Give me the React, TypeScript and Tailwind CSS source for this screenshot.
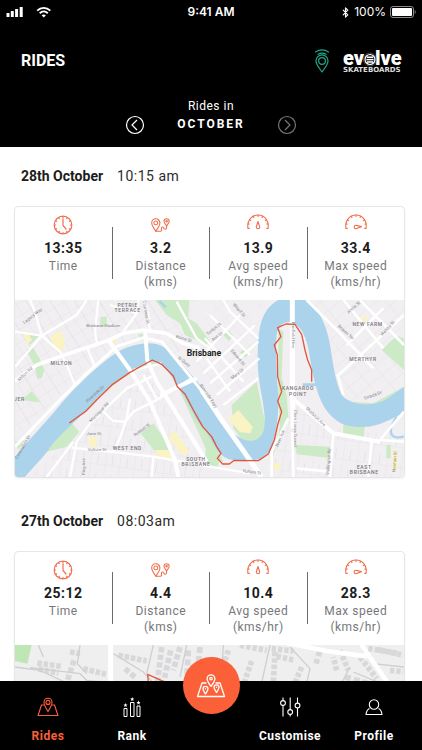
import React from "react";
import { Bluetooth } from "lucide-react";

type IconProps = { className?: string };

const rides = [
  { date: "28th October", time: "10:15 am", duration: "13:35", distance: "3.2", avg: "13.9", max: "33.4", map: <CityMap /> },
  { date: "27th October", time: "08:03am", duration: "25:12", distance: "4.4", avg: "10.4", max: "28.3", map: <SuburbMap /> },
];

/* Icons */
function ClockIcon() {
  return (
    <svg viewBox="0 0 24 22" className="h-[22px] w-6" fill="none" stroke="#f0704f" strokeWidth="1.2" strokeLinecap="round">
      <circle cx="12" cy="11" r="8.8" />
      <path d="M12 4.5V11.5L15 15" />
      <path d="M12 2.5v1M12 18.5v1M3.5 11h1M19.5 11h1M7.8 3.7l.5.9M15.7 17.4l.5.9M4.7 6.8l.9.5M18.4 14.7l.9.5M16.2 3.7l-.5.9M8.3 17.4l-.5.9M19.3 6.8l-.9.5M5.6 14.7l-.9.5" />
    </svg>
  );
}

function DistanceIcon() {
  return (
    <svg viewBox="0 0 24 22" className="h-[22px] w-6" fill="none" stroke="#f0704f" strokeWidth="1.1" strokeLinecap="round" strokeLinejoin="round">
      <path d="M6.8 17.2C5 14.4 2.7 11.4 2.7 8.900a4 4 0 0 1 8.200 0c0 2.500-2.300 5.500-4.100 8.300z" />
      <circle cx="6.800" cy="8.900" r="1.900" />
      <path d="M17.600 11.800c-1.200-1.500-2.600-2.900-2.600-4.500a2.600 2.600 0 0 1 5.200 0c0 1.600-1.400 3-2.600 4.500z" />
      <circle cx="17.600" cy="7.300" r=".7" />
      <path d="M6.800 17.200h4.600c2.600 0-.3-4.200 2.100-4.200 1.900 0 .7 2.300 2.600 2.300 1.700 0 1.500-1.900 1.500-3.500" />
    </svg>
  );
}

function GaugeIcon({ fast }: { fast?: boolean }) {
  return (
    <svg viewBox="0 0 24 22" className="h-[22px] w-6" fill="none" stroke="#f0704f" strokeWidth="1.1" strokeLinecap="round" strokeLinejoin="round">
      <path d="M2 14.500C.6 7 5.500 1 12 1s11.400 6 10 13.500" />
      <path d="M2 14.500l1.500-.3M22 14.500l-1.500-.3M1.700 10h1.500M22.300 10h-1.500M3.500 5.800l1.200.8M20.500 5.800l-1.200.8M7.200 2.300l.7 1.300M16.800 2.300l-.7 1.300M12 1v1.500" />
      <path
        transform={fast ? "rotate(86 12 13)" : undefined}
        d="M12 7.500l1.600 5c.5 1.500-.6 2.300-1.600 2.300s-2.100-.8-1.600-2.300z"
      />
    </svg>
  );
}

function RidesIcon({ className }: IconProps) {
  return (
    <svg viewBox="0 0 22 20" className={className} fill="none" stroke="currentColor" strokeWidth="1.1" strokeLinejoin="round" strokeLinecap="round">
      <path d="M6.500 8H4.500L1 18.500h20L17.500 8h-2" />
      <path d="M11 14.500C9 11.500 7 8.200 7 5.300a4 4 0 0 1 8 0C15 8.200 13 11.500 11 14.500z" />
      <circle cx="11" cy="5.400" r="2" />
    </svg>
  );
}

function RankIcon({ className }: IconProps) {
  return (
    <svg viewBox="0 0 20 20" className={className} fill="none" stroke="currentColor" strokeWidth="1">
      <path d="M2 11.500h3v8H2zM8.500 5.500h3.500v14H8.500zM15 9h3v10.500h-3z" />
      <path
        fill="currentColor"
        stroke="none"
        d="M10.200 0l.6 1.400 1.500.1-1.200 1 .4 1.500-1.300-.8-1.300.8.4-1.500-1.200-1 1.500-.1zM3.500 6l.6 1.400 1.500.1-1.200 1 .4 1.500-1.300-.8-1.300.8.4-1.500-1.200-1 1.500-.1zM16.500 3.500l.6 1.400 1.500.1-1.200 1 .4 1.500-1.300-.8-1.300.8.4-1.500-1.200-1 1.500-.1z"
      />
    </svg>
  );
}

function CustomiseIcon({ className }: IconProps) {
  return (
    <svg viewBox="0 0 22 20" className={className} fill="none" stroke="currentColor" strokeWidth="1.100">
      <path d="M4 .5v3M4 8.500v11M11.200.5v12M11.200 17.500v2M18.500.5v5.500M18.500 11v8.500" />
      <circle cx="4" cy="6" r="2.400" />
      <circle cx="11.200" cy="15" r="2.400" />
      <circle cx="18.500" cy="8.500" r="2.400" />
    </svg>
  );
}

function ProfileIcon({ className }: IconProps) {
  return (
    <svg viewBox="0 0 20 20" className={className} fill="none" stroke="currentColor" strokeWidth="1.100" strokeLinejoin="round">
      <circle cx="10" cy="7.500" r="4.700" />
      <path d="M5.500 11.500C3.500 12.500 2.300 14.500 2 17.500h16c-.3-3-1.500-5-3.500-6" />
    </svg>
  );
}

function TrackIcon() {
  return (
    <svg viewBox="0 0 30 24" className="h-6 w-[30px]" fill="none" stroke="white" strokeWidth="1.300" strokeLinejoin="round" strokeLinecap="round">
      <path d="M10 9H6L1.500 22.500h27L24 9h-4" />
      <path d="M15 12.500c-2-3-3.900-5.300-3.900-7.800a3.900 3.900 0 0 1 7.800 0c0 2.500-1.900 4.800-3.900 7.800z" />
      <circle cx="15" cy="4.600" r="1.300" />
      <path d="M9.500 20c-1.300-2-2.500-3.500-2.500-5.200a2.500 2.500 0 0 1 5 0c0 1.700-1.200 3.200-2.500 5.200zM20.500 18.500c-1.300-2-2.500-3.500-2.500-5.200a2.500 2.500 0 0 1 5 0c0 1.700-1.200 3.200-2.500 5.200z" />
      <path d="M9.500 14.600v.3M20.500 13.100v.3" />
    </svg>
  );
}

function BoardPin() {
  return (
    <svg viewBox="0 0 16 24" className="h-6 w-4" fill="none" stroke="#1fa88c" strokeWidth="1.200" strokeLinecap="round" strokeLinejoin="round">
      <path d="M1.500 3C5.500.4 10.500.4 14.500 3M4 5.300c2.600-1.400 5.400-1.400 8 0" />
      <path d="M8 23C5 18.500 2 15.500 2 11.900a6 6 0 0 1 12 0C14 15.500 11 18.500 8 23z" />
      <circle cx="8" cy="12" r="3.400" />
    </svg>
  );
}

function Logo() {
  return (
    <svg viewBox="0 0 60 32" className="h-8 w-[60px]" role="img" aria-label="evolve skateboards" fill="white">
      <g fontFamily="Roboto, sans-serif" fontWeight="900" fontSize="20">
        <text x="0" y="20">ev</text>
        <text x="32" y="20">lve</text>
      </g>
      <circle cx="27" cy="14.500" r="5" fill="#222" stroke="white" strokeWidth="1.200" />
      <circle cx="27" cy="14.500" r="6.500" fill="none" stroke="#777" strokeWidth=".6" />
      <path d="M24 12.200h6M23.500 14.600h7M24 17h6" stroke="white" strokeWidth="1.400" />
      <text x="0" y="27" fontFamily="'DejaVu Sans', sans-serif" fontWeight="700" fontSize="7" fill="#ddd">
        SKATEBOARDS
      </text>
    </svg>
  );
}

/* Maps */
function CityMap() {
  return (
    <svg viewBox="15 15 1167 531" className="block w-full bg-[#f1eff1]" fill="none" fontFamily="Roboto, sans-serif">
      <defs>
        <pattern id="blocksWest" width="62" height="34" patternUnits="userSpaceOnUse" patternTransform="rotate(-32)">
          <path d="M0 0H62M0 0V34M31 0V34" stroke="#e1dfe2" strokeWidth="2" />
        </pattern>
        <pattern id="blocksSouth" width="44" height="58" patternUnits="userSpaceOnUse" patternTransform="rotate(8)">
          <path d="M0 0H44M0 0V58M22 28V58" stroke="#e1dfe2" strokeWidth="2" />
        </pattern>
        <pattern id="blocksEast" width="50" height="36" patternUnits="userSpaceOnUse" patternTransform="rotate(-40)">
          <path d="M0 0H50M0 0V36" stroke="#e1dfe2" strokeWidth="2" />
        </pattern>
      </defs>
      <path d="M15 15H560L500 190 400 130 230 215 15 440z" fill="url(#blocksWest)" />
      <path d="M60 546L220 400 420 200 500 330 590 546z" fill="url(#blocksSouth)" />
      <path d="M790 546V400L850 310 980 400 1182 420V546z" fill="url(#blocksSouth)" />
      <path d="M900 15H1182V290L1020 320z" fill="url(#blocksEast)" />
      <path d="M590 15H760L750 290 640 360 560 220z" fill="url(#blocksEast)" opacity=".6" />

      {/* parks */}
      <g fill="#cdeac6">
        <path d="M435 15L470 60 510 85 525 120 590 150 600 138 560 85 535 70 538 15z" />
        <path d="M48 165L70 158 88 190 103 225 95 250 82 252 75 215z" />
        <path d="M35 110L90 118 60 150z" />
        <path d="M35 315L65 288 90 322z" />
        <path d="M272 65h18v30h-20z" />
        <path d="M130 420L185 383 208 410 170 455 110 470 50 535 40 543z" />
        <path d="M392 415L430 385 490 470 450 490z" />
        <path d="M510 290L530 300 560 350 610 440 640 500 600 490 560 400z" />
        <path d="M200 345L270 285 340 235 400 200 440 190 445 210 400 212 330 255 270 305 220 360z" />
        <path d="M385 118h26l-8 18h-12z" />
        <path d="M740 260L765 380 762 415 740 440 700 440 670 400 665 330z" />
        <path d="M640 120l16-14 14 16-14 16zM690 172l14-14 14 16-12 14z" />
        <path d="M805 100L820 110 815 250 830 300 835 370 800 450 790 480 780 490 810 400 805 300z" />
        <path d="M1115 165L1160 122 1182 130V225z" />
        <path d="M1000 380h65l-4 55-62-12z" />
        <path d="M855 450L960 455 955 488 860 478z" />
        <path d="M975 290L1020 340 1090 340 1182 290V275L1090 325 1020 320z" />
        <path d="M1130 450h12v40h-14z" />
        <path d="M15 440l30-5-20 30zM590 450l40 40-8 30-40-20z" />
      </g>
      <g fill="#faf3c3">
        <path d="M120 125L150 107 165 135 160 165 140 170z" />
        <path d="M36 112l16-2 14 26-14 12z" />
        <path d="M475 425L495 408 540 470 515 480z" />
        <path d="M435 465h40l15 30-50-8z" />
        <path d="M238 425h22v30h-22z" />
        <path d="M655 372L685 345 728 395 722 415 690 412z" />
        <path d="M1050 70l16-8 8 14-16 8zM1148 465h14v60h-16zM790 505h20v20h-20zM300 130h18v14h-18z" />
      </g>

      {/* river */}
      <path
        d="M15 485C60 430 110 380 150 330C210 260 300 178 345 160C380 146 430 135 465 158C500 185 540 235 575 275C610 320 625 375 655 400C690 440 740 455 760 410C775 350 745 290 743 200C745 110 745 50 805 15H885C925 35 950 90 960 150C970 210 980 290 1005 310C1040 335 1100 335 1140 305L1182 275V355C1140 370 1115 395 1060 396C1010 398 975 385 945 340C915 290 905 220 895 160C885 115 870 95 850 85C830 72 803 90 800 120C795 170 800 240 805 300C808 350 800 420 780 465C760 500 705 506 655 492C620 480 610 440 585 405C560 385 545 340 520 300C495 270 485 235 460 212C435 192 410 198 370 225C320 252 270 295 230 345C190 385 150 420 125 450C100 490 70 515 45 546H15z"
        fill="#abd3ec"
      />
      <path d="M1160 365C1130 410 1140 435 1182 425" stroke="#abd3ec" strokeWidth="7" />
      <path d="M878 269h40M448 18l20 20" stroke="#abd3ec" strokeWidth="8" />

      {/* roads */}
      <g stroke="#fff" strokeLinejoin="round">
        <path
          strokeWidth="7"
          d="M15 110L95 122 200 60 230 15M60 15L75 50 95 122 150 170 170 210 195 270M15 215L95 122M230 155L255 215M265 15L255 110 262 150M400 15L415 60 420 110M385 15L380 55 340 110M300 30L380 55M180 546L200 440 240 385 350 280 425 245M110 546L190 440M360 310L350 370 330 430 310 470M430 485L425 546M545 250L440 315 370 350 345 380 310 378 280 350M370 225L455 205M400 240L440 310M420 320L455 400M185 458L300 470 430 485 600 515 720 535M500 20L560 130 600 160M560 200L690 60M580 235L735 90M600 265L745 140M620 300L748 190M640 330L745 250M600 60L720 180M640 15L660 50 745 130M585 130L700 260M590 190L660 290"
        />
        <path strokeWidth="8" d="M835 370L785 470V546M847 410L850 546M970 415L960 546M1085 440L1075 546M1182 440L1110 435M860 520L960 530M980 245L1182 60M985 245L1000 300M1050 15L1182 150M890 15L985 110 1090 220M1000 15L1120 160M1110 435L1182 350M1010 150L1120 40" />
        <path strokeWidth="11" d="M15 258L80 210 170 178 290 138 340 115 400 105 470 115 520 145 570 160" />
        <path strokeWidth="9" d="M15 455L140 325 230 235 320 155 400 128 455 140 545 250 585 300" />
        <path strokeWidth="12" d="M295 135L360 225 420 320 495 495 505 546M405 105L412 195 440 260 590 500M450 300L560 250M847 310L970 415 1110 440" />
        <path strokeWidth="15" d="M575 285L635 375 695 460 755 546M847 15V300L850 400" />
      </g>

      <path
        d="M178 384L228 348 265 310 308 268 360 232 427 195 455 208 490 243 502 275 525 297 550 345 578 395 605 425 620 455 633 475 622 490 638 507 658 507 673 496 745 497 775 477 793 435 803 390 815 350 803 318 815 290 803 245 802 180 793 150 813 125 803 98 828 87 855 88 875 118 885 165 893 195 905 225V260"
        stroke="#e2573c"
        strokeWidth="4"
        strokeLinejoin="round"
      />

      <g fill="#77757a" fontSize="15" fontWeight="500" letterSpacing="2" textAnchor="middle">
        <text x="353" y="36">PETRIE</text>
        <text x="353" y="51">TERRACE</text>
        <text x="154" y="209">MILTON</text>
        <text x="28" y="318">JER</text>
        <text x="352" y="464">WEST END</text>
        <text x="558" y="497">SOUTH</text>
        <text x="558" y="512">BRISBANE</text>
        <text x="1073" y="93">NEW FARM</text>
        <text x="1059" y="199">MERTHYR</text>
        <text x="864" y="286">KANGAROO</text>
        <text x="864" y="302">POINT</text>
        <text x="1063" y="522">EAST</text>
        <text x="1063" y="538">BRISBANE</text>
      </g>
      <g fill="#858388" fontSize="13" textAnchor="middle">
        <text x="280" y="97">Brisbane Stadium</text>
        <text transform="translate(70 66) rotate(-38)">Legacy Way</text>
        <text transform="translate(48 240) rotate(-42)">Milton Rd</text>
        <text transform="translate(258 300) rotate(-42)">Riverside Dr</text>
        <text transform="translate(270 355) rotate(-46)">Montague Rd</text>
        <text x="252" y="420">Jane St</text>
        <text x="261" y="467">Vulture St</text>
        <text transform="translate(398 408) rotate(-35)">Russell St</text>
        <text transform="translate(226 515) rotate(-90)">Ring Ave</text>
        <text transform="translate(520 135) rotate(16)">Roma St</text>
        <text transform="translate(520 203) rotate(38)">N Quay</text>
        <text transform="translate(404 52) rotate(80)">Countess St</text>
        <text transform="translate(592 305) rotate(56)">Riverside Expy</text>
        <text transform="translate(684 48) rotate(48)">Wharf St</text>
        <text transform="translate(614 105) rotate(-38)">Turbot St</text>
        <text transform="translate(624 128) rotate(-38)">Ann St</text>
        <text transform="translate(680 190) rotate(50)">Edward St</text>
        <text transform="translate(684 240) rotate(-38)">Mary St</text>
        <text transform="translate(845 120) rotate(90)">Bradfield Hwy</text>
        <text transform="translate(852 400) rotate(90)">Clem Jones Tunnel</text>
        <text transform="translate(914 368) rotate(44)">Shafston Ave</text>
        <text transform="translate(814 432) rotate(-68)">River Tce</text>
        <text transform="translate(725 535) rotate(8)">Vulture St</text>
        <text transform="translate(1005 115) rotate(42)">Bowen Ter</text>
        <text transform="translate(1034 40) rotate(-42)">Annie St</text>
        <text transform="translate(1136 103) rotate(-48)">Welsby St</text>
        <text transform="translate(1090 305) rotate(-20)">Oxlade Dr</text>
        <text transform="translate(960 500) rotate(-86)">Wellington Rd</text>
        <text transform="translate(1158 500) rotate(-86)">Norman St</text>
        <text transform="translate(42 458) rotate(-60)">Coronation Dr</text>
      </g>
      <text x="530" y="182" fill="#232323" fontSize="26" fontWeight="700">
        Brisbane
      </text>
    </svg>
  );
}

function SuburbMap() {
  return (
    <svg viewBox="45 24 1167 531" className="block w-full bg-[#f0eff0]" fill="none">
      <path d="M45 24H95L82 80 45 72z" fill="#bfe6b5" />
      {/* houses */}
      <g stroke="#d8d7d9" strokeWidth="17">
        <path strokeDasharray="14 5" d="M112 78L182 88M115 96L175 108M250 95L318 112M210 45L240 50M355 55L440 72" />
        <path strokeDasharray="16 7" d="M222 70L200 138M485 30L472 138M512 40L490 138M540 30L520 100M375 95L410 125" />
        <path strokeDasharray="13 6" d="M685 40L668 92M755 72L732 138M815 35L880 42M830 58L885 70M905 90L885 138M720 25L800 40M1020 40L1045 100M1080 60L1130 125M1135 38L1210 55M1010 100L1000 60M825 45L820 138M1105 35L1190 48M1170 100L1210 104" />
        <path strokeDasharray="18 9" d="M565 40L560 130M600 30L590 138M640 60L630 138M960 40L948 80M1035 120L1100 138" />
      </g>
      <g stroke="#cfced0" strokeWidth="4">
        <path d="M90 92L240 110 260 130 320 136M130 60L115 24M240 24L232 80 260 110M45 90L120 100 200 138" />
        <path d="M340 50L430 105 460 138M460 24L440 110M560 24L540 120M810 24L785 138M870 30L930 95 920 138M670 24L665 110 700 138M1050 90L1025 138M1060 105L1140 138M1120 80L1212 90" />
      </g>
      <g stroke="#fff" strokeLinejoin="round">
        <path strokeWidth="15" d="M332 24V546" />
        <path strokeWidth="14" d="M860 18L980 42 1100 58M1085 24L1120 75 1165 140" />
        <path strokeWidth="8" d="M45 230L332 260 700 300 1212 340M600 138L560 546" />
      </g>
      <path d="M640 200L443 112 455 250 540 300" stroke="#e2573c" strokeWidth="4" strokeLinejoin="round" />
    </svg>
  );
}

type StatProps = { icon: React.ReactNode; value: string; label: string; unit?: string };

function Stat({ icon, value, label, unit }: StatProps) {
  return (
    <div className="flex flex-col items-center pt-[7px] pb-[10px] text-center">
      {icon}
      <p className="mt-[2px] text-sm leading-5 font-bold tracking-[0.5px] text-[#1c1c1c]">{value}</p>
      <p className="text-xs leading-4 tracking-[0.5px] text-[#77777a]">{label}</p>
      {unit && <p className="text-xs leading-4 tracking-[0.5px] text-[#77777a]">{unit}</p>}
    </div>
  );
}

function Divider() {
  return <div className="mt-5 h-[52px] w-px bg-[#6b6b6b]" />;
}

export default function App() {
  return (
    <div className="flex h-screen flex-col overflow-hidden bg-white font-[Roboto,sans-serif]">
      <header className="shrink-0 bg-black pb-3 text-white">
        {/* Status bar */}
        <div className="grid h-6 grid-cols-3 items-center px-[6px] font-[Inter,sans-serif] text-xs leading-4">
          <div className="flex items-center gap-3">
            <svg viewBox="0 0 18 12" className="h-3 w-[18px]" fill="white">
              <path d="M.5 7h3v4h-3zM4.800 5h3v6h-3zM9.100 3h3v8h-3zM13.700 1h3v10h-3z" />
            </svg>
            <svg viewBox="0 0 16 12" className="h-3 w-4" fill="none" stroke="white" strokeWidth="1.900">
              <path d="M1.200 4.600C5 .9 10.500.9 14.300 4.600M3.700 7.200c2.400-2.200 5.700-2.200 8.100 0" />
              <path d="M7.750 11.500L5.600 9.300c1.200-1 3.100-1 4.300 0z" fill="white" stroke="none" />
            </svg>
          </div>
          <span className="text-center font-semibold">9:41 AM</span>
          <div className="flex items-center justify-end">
            <Bluetooth size={11} strokeWidth={2.5} />
            <span className="mr-1 ml-[3px]">100%</span>
            <svg viewBox="0 0 26 12" className="h-3 w-[26px]">
              <rect x=".5" y=".5" width="23" height="11" rx="2.500" fill="none" stroke="#8a8a8a" />
              <rect x="2" y="2" width="20" height="8" rx="1" fill="white" />
              <path d="M24.700 4c1.300.6 1.300 3.400 0 4z" fill="#8a8a8a" />
            </svg>
          </div>
        </div>

        <div className="mt-[21px] flex h-8 items-center justify-between pr-[19px] pl-[21px]">
          <h1 className="text-base leading-6 font-bold">RIDES</h1>
          <div className="flex items-center gap-[13px]">
            <BoardPin />
            <Logo />
          </div>
        </div>

        {/* Month picker */}
        <div className="mt-[21px] flex items-end justify-center gap-8">
          <button aria-label="Previous month">
            <svg viewBox="0 0 20 20" className="size-5" fill="none" stroke="white" strokeWidth="1.200">
              <circle cx="10" cy="10" r="8.500" />
              <path d="M12 5L7 10l5 5" />
            </svg>
          </button>
          <div className="text-center">
            <p className="text-xs leading-4 tracking-[0.5px]">Rides in</p>
            <p className="pt-[2px] pb-[3px] text-xs leading-4 font-bold tracking-[2px]">OCTOBER</p>
          </div>
          <button aria-label="Next month">
            <svg viewBox="0 0 20 20" className="size-5" fill="none" stroke="#777" strokeWidth="1.200">
              <circle cx="10" cy="10" r="8.500" />
              <path d="M8 5l5 5-5 5" />
            </svg>
          </button>
        </div>
      </header>

      <main className="min-h-0 flex-1 overflow-y-auto pr-[17px] pl-[14px] [scrollbar-width:none]">
        {rides.map((ride) => (
          <section key={ride.date} className="mb-[14px] pt-[19px]">
            <div className="flex items-baseline gap-[14px] pl-[7px]">
              <h2 className="text-sm leading-5 font-bold text-[#1c1c1c]">{ride.date}</h2>
              <span className="text-sm leading-5 tracking-[0.5px] text-[#2b2b2b]">{ride.time}</span>
            </div>
            <div className="mt-5 overflow-hidden rounded border border-[#e6e6e6] shadow-xs">
              <div className="grid grid-cols-[1fr_auto_1fr_auto_1fr_auto_1fr]">
                <Stat icon={<ClockIcon />} value={ride.duration} label="Time" />
                <Divider />
                <Stat icon={<DistanceIcon />} value={ride.distance} label="Distance" unit="(kms)" />
                <Divider />
                <Stat icon={<GaugeIcon />} value={ride.avg} label="Avg speed" unit="(kms/hr)" />
                <Divider />
                <Stat icon={<GaugeIcon fast />} value={ride.max} label="Max speed" unit="(kms/hr)" />
              </div>
              {ride.map}
            </div>
          </section>
        ))}
      </main>

      {/* Tab bar */}
      <nav className="relative grid h-[69px] shrink-0 grid-cols-[1fr_1fr_74px_1fr_1fr] bg-black px-[6px] text-xs leading-4 font-bold tracking-[0.5px] text-white">
        <a href="#rides" className="flex flex-col items-center pt-4 text-[#fc6038]">
          <RidesIcon className="h-5 w-[22px]" />
          <span className="mt-[11px]">Rides</span>
        </a>
        <a href="#rank" className="flex flex-col items-center pt-4">
          <RankIcon className="size-5" />
          <span className="mt-[11px]">Rank</span>
        </a>
        <div className="flex justify-center">
          <button aria-label="Track a ride" className="absolute -top-6 flex size-[57px] items-center justify-center rounded-full bg-[#fc6038]">
            <TrackIcon />
          </button>
        </div>
        <a href="#customise" className="flex flex-col items-center pt-4">
          <CustomiseIcon className="h-5 w-[22px]" />
          <span className="mt-[11px]">Customise</span>
        </a>
        <a href="#profile" className="flex flex-col items-center pt-4">
          <ProfileIcon className="size-5" />
          <span className="mt-[11px]">Profile</span>
        </a>
      </nav>
    </div>
  );
}
